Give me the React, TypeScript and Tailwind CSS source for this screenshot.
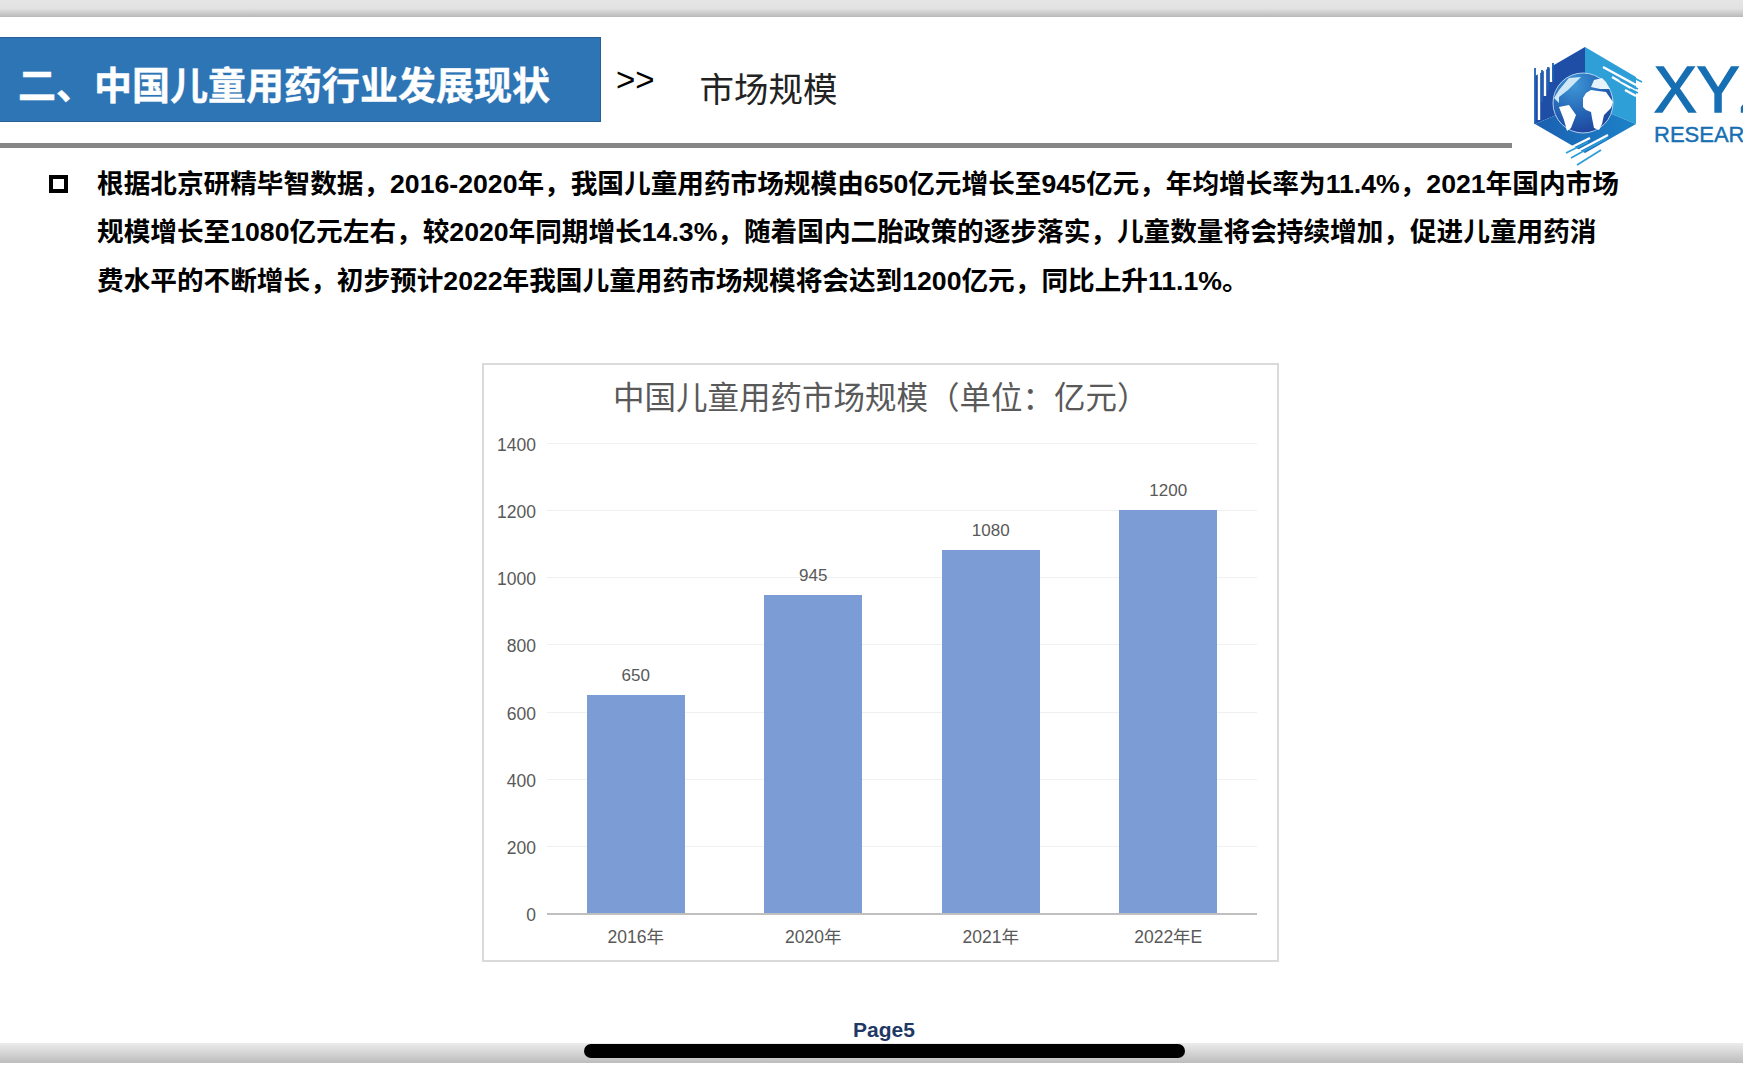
const cjk = "font-['Liberation_Sans','Noto_Sans_CJK_SC',sans-serif]";

const bars = [
  { label: "2016年", value: 650 },
  { label: "2020年", value: 945 },
  { label: "2021年", value: 1080 },
  { label: "2022年E", value: 1200 },
];
const ticks = [1400, 1200, 1000, 800, 600, 400, 200, 0];

const Logo = () => (
  <svg viewBox="0 0 130 130" className="w-[130px] h-[130px]">
    <defs>
      <radialGradient id="globe" cx="0.35" cy="0.2" r="0.95">
        <stop offset="0" stopColor="#3f97d6" />
        <stop offset="0.5" stopColor="#2566b6" />
        <stop offset="1" stopColor="#1c3a94" />
      </radialGradient>
      <linearGradient id="floor" x1="0" x2="1" y1="0" y2="0">
        <stop offset="0" stopColor="#1a5fb0" />
        <stop offset="1" stopColor="#1c83c8" />
      </linearGradient>
    </defs>
    <path d="M59 7 L59 63 L9 84 L9 36 Z" fill="#1e4ea6" />
    <path d="M59 7 L110 37 L110 84 L59 63 Z" fill="#2f9fd8" />
    <path d="M9 84 L59 63 L110 84 L59 113 Z" fill="url(#floor)" />
    {/* globe */}
    <circle cx="57" cy="63" r="30" fill="url(#globe)" stroke="#d7ebf8" strokeWidth="0.8" />
    <path d="M57 58 L60 53 L65 50 L72 51 L80 52 L87 62 L85 68 L78 75 L76 84 L73 90 L68 88 L66 78 L65 72 L60 70 L57 67 Z" fill="#fff" />
    <path d="M65 47 L68 40 L76 38 L80 42 L84 49 L74 49 Z" fill="#e8f4fb" />
    <path d="M33 67 L43 65 L50 75 L45 88 L41 91 L38 80 Z" fill="#fff" />
    <path d="M28 58 L33 50 L43 38 L55 37 L50 42 L42 50 L33 57 L33 63 Z" fill="#cfe8f7" />
    {/* speed lines */}
    <g stroke="#fff" strokeWidth="2.4" fill="none">
      <path d="M13 32 L13 80 M19 28 L19 56 M25 25 L25 42" />
      <path d="M77 27 L110 45 M86 37 L110 51 M99 50 L110 56" />
      <path d="M44 108 L64 98 M48 113 L82 95 M54 118 L76 106" />
    </g>
    <g stroke="#1d63b8" strokeWidth="1.8" fill="none">
      <path d="M9 28 L9 84 M16 30 L16 62 M22 27 L22 50 M27 23 L27 40" />
    </g>
    <g stroke="#2c9ed8" strokeWidth="1.8" fill="none">
      <path d="M78 23 L116 42 M94 40 L112 49 M104 49 L112 53" />
      <path d="M40 113 L62 102 M45 118 L81 98 M51 125 L75 110" />
    </g>
  </svg>
);

export default function App() {
  return (
    <div className={`w-[1743px] h-[1080px] overflow-hidden bg-white flex flex-col ${cjk}`}>
      {/* top bar */}
      <div className="h-[17px] shrink-0 bg-gradient-to-b from-[#e6e6e6] via-[#e2e2e2] to-[#b9b9b9]" />

      {/* header */}
      <div className="h-[133px] shrink-0 flex items-start">
        <div className="w-[1534px] shrink-0 flex flex-col">
          <div className="flex items-start pt-[20px]">
            <div className="w-[601px] h-[85px] bg-[#2e75b6] border-y border-r border-[#2a5f96] flex items-center pl-[18px] pt-[13px] text-[38px] font-bold text-white [-webkit-text-stroke:0.4px_#fff]">
              二、中国儿童用药行业发展现状
            </div>
            <div className="ml-[15px] mt-[23px] text-[33px] leading-[40px] text-black">&gt;&gt;</div>
            <div className="ml-[45px] mt-[30px] text-[34.5px] leading-[46px] text-[#222]">市场规模</div>
          </div>
          <div className="mt-[21px] w-[1512px] h-[5px] bg-[#868686]" />
        </div>
        <div className="-ml-[8px] mt-[23px] w-[130px] shrink-0">
          <Logo />
        </div>
        <div className="-ml-[2px] mt-[41px] font-['Liberation_Sans',sans-serif] text-[#176fb3] whitespace-nowrap">
          <div className="text-[64px] leading-[64px] [-webkit-text-stroke:1.5px_#176fb3]">XYZ</div>
          <div className="text-[22px] leading-[26px] [-webkit-text-stroke:0.4px_#176fb3]">RESEARCH</div>
        </div>
      </div>

      {/* body text */}
      <div className="flex -mt-[1px] pt-[11px] pl-[49px] h-[148px] shrink-0">
        <div className="w-[19px] h-[18px] mt-[15px] border-[4px] border-black" />
        <p className="ml-[29px] text-[26.65px] leading-[48.3px] font-bold text-black whitespace-nowrap">
          根据北京研精毕智数据，2016-2020年，我国儿童用药市场规模由650亿元增长至945亿元，年均增长率为11.4%，2021年国内市场
          <br />
          规模增长至1080亿元左右，较2020年同期增长14.3%，随着国内二胎政策的逐步落实，儿童数量将会持续增加，促进儿童用药消
          <br />
          费水平的不断增长，初步预计2022年我国儿童用药市场规模将会达到1200亿元，同比上升11.1%。
        </p>
      </div>

      {/* chart */}
      <div className="ml-[482px] mt-[66px] w-[797px] h-[599px] shrink-0 border-2 border-[#dadada] text-[#595959] flex flex-col">
        <div className="h-[78px] pt-[11px] pl-[129px] text-[31.5px] leading-[44px] whitespace-nowrap">
          中国儿童用药市场规模（单位：亿元）
        </div>
        <div className="flex">
          <div className="w-[52px] h-[470px] mt-[2px] flex flex-col justify-between items-end text-[17.5px] leading-[0]">
            {ticks.map((t) => (
              <span key={t}>{t}</span>
            ))}
          </div>
          <div className="ml-[11px] w-[710px]">
            <div className="grid h-[472px] border-b-2 border-[#bfbfbf]">
              <div className="col-start-1 row-start-1 h-[470px] flex flex-col justify-between">
                {ticks.slice(0, 7).map((t) => (
                  <div key={t} className="h-px bg-[#f0f0f0]" />
                ))}
                <div className="h-0" />
              </div>
              <div className="col-start-1 row-start-1 grid grid-cols-4">
                {bars.map((b) => (
                  <div key={b.label} className="flex flex-col items-center justify-end">
                    <span className="text-[17px] leading-[20px] mb-[9px]">{b.value}</span>
                    <div className="w-[98px] bg-[#7b9cd4]" style={{ height: b.value * 0.336 }} />
                  </div>
                ))}
              </div>
            </div>
            <div className="grid grid-cols-4 mt-[10px]">
              {bars.map((b) => (
                <div key={b.label} className="text-center text-[17.5px] leading-[24px]">
                  {b.label}
                </div>
              ))}
            </div>
          </div>
        </div>
      </div>

      {/* footer */}
      <div className="mt-[56px] pl-[853px] text-[21px] leading-[24px] font-bold text-[#1f3864]">Page5</div>
      <div className="h-[20px] shrink-0 mt-[1px] pt-[1px] bg-gradient-to-b from-[#ececec] to-[#bdbdbd]">
        <div className="ml-[584px] w-[601px] h-[14px] rounded-[7px] bg-black" />
      </div>
    </div>
  );
}
